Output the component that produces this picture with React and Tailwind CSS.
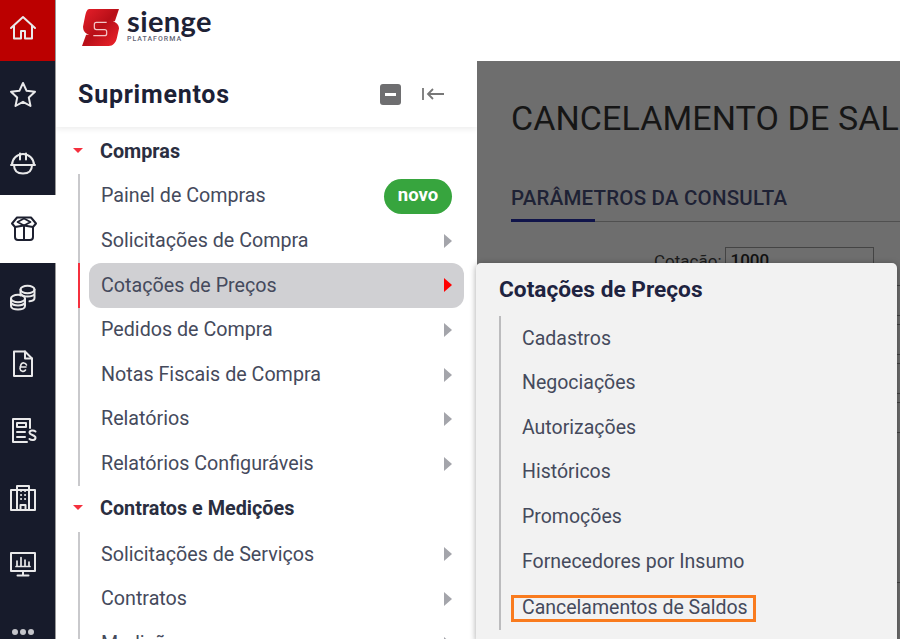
import React from "react";

const F = { fontFamily: "Roboto, 'Liberation Sans', sans-serif" };

function Ic({ children, active }) {
  return (
    <svg width="30" height="30" viewBox="0 0 30 30" fill="none" stroke={active ? "#1d2030" : "#e9e9ea"} strokeWidth="2" strokeLinejoin="round" strokeLinecap="round">
      {children}
    </svg>
  );
}

function Rail({ h, bg = "", children, cls = "" }) {
  return <div className={`flex items-center justify-center pr-[10px] ${bg} ${cls}`} style={{ height: h }}>{children}</div>;
}

function Item({ label, active, badge, arrow = true }) {
  return (
    <div className="relative flex items-center justify-between h-[44.6px]">
      {active && <div className="absolute left-[22px] top-0 w-[2px] h-[45px] bg-[#f5303e]" />}
      <div className={`ml-[33px] w-[375px] h-[45px] rounded-[12px] flex items-center pl-[12px] pr-[12px] justify-between ${active ? "bg-[#d0d0d3]" : ""}`}>
        <span className="text-[19.7px] leading-none text-[#454a5c]">{label}</span>
        {badge && <span className="bg-[#37a53e] text-white font-bold text-[18.5px] leading-none rounded-full w-[68px] h-[35px] flex items-center justify-center pb-[2px]">novo</span>}
        {arrow && !badge && <span className={`w-0 h-0 border-y-[7px] border-y-transparent border-l-[8px] ${active ? "border-l-[#f00]" : "border-l-[#a4a5ab]"}`} />}
      </div>
    </div>
  );
}

function Section({ label, h }) {
  return (
    <div className="relative flex items-center pl-[44px]" style={{ height: h }}>
      <span className="absolute left-[17px] top-[19px] w-0 h-0 border-x-[5px] border-x-transparent border-t-[5px] border-t-[#f5303e]" />
      <span className="text-[19.8px] leading-none font-bold text-[#2a2e40]">{label}</span>
    </div>
  );
}

export default function App() {
  const sub = ["Cadastros", "Negociações", "Autorizações", "Históricos", "Promoções", "Fornecedores por Insumo"];
  const ticks = [285, 315, 324, 354, 363, 393, 402, 432, 582];
  return (
    <div style={F} className="relative w-[900px] h-[639px] overflow-hidden flex bg-white">
      <div className="w-[56px] h-[639px] shrink-0 bg-[#171b2b] flex flex-col border-r border-[#999]">
        <Rail h={61} bg="bg-[#bb0000]" cls="pb-[5px]"><Ic><path d="M3 15 15 4l12 11" /><path d="M6 13v12.500h7V18h4v7.500h7V13" /></Ic></Rail>
        <Rail h={68}><Ic><path d="m15 3 3.600 7.800 8.400 1-6.200 5.800 1.700 8.400-7.500-4.200L7.500 26l1.700-8.400L3 11.800l8.400-1z" /></Ic></Rail>
        <Rail h={66}><Ic><path d="M4 18a11 11 0 0 1 22 0" /><path d="M12 6.500v6M18 6.500v6" /><path d="M3 18h24M6 18c0 6 4 8.500 9 8.500s9-2.500 9-8.500" /></Ic></Rail>
        <Rail h={68} bg="bg-white w-[57px]"><Ic active><path d="M3 9.500 8 3.500h14l5 6-3 3.500v10c0 2-1 3-3 3H9c-2 0-3-1-3-3V13z" /><path d="M8.500 8 15 4.500 21.500 8 15 11.500z" strokeWidth="1.700" /><path d="M6 13l9-1.500L24 13M15 11.500V26" /></Ic></Rail>
        <Rail h={68}><Ic><ellipse cx="19.500" cy="7.500" rx="7" ry="3.700" /><path d="M12.500 7.500v6M26.500 7.500v8.500c0 1.500-2 3-5 3.300M13 12c1 1.500 3.500 2.500 6.500 2.500s6-1 7-2.500" /><ellipse cx="10" cy="16.500" rx="7" ry="3.700" /><path d="M3 16.500v7.500c0 2 3 3.500 7 3.500s7-1.500 7-3.500v-7.500M3 20.500c1 2 3.500 3 7 3s6-1 7-3" /></Ic></Rail>
        <Rail h={66}><Ic><path d="M6 2.500h11l7 7V27H6z" /><path d="M17 2.500v7h7" /><path d="M18.500 16a3 3 0 0 0-5.500-.5l-1 4a3 3 0 0 0 5.500 1.500M12 18h6" strokeWidth="1.600" /></Ic></Rail>
        <Rail h={67}><Ic><path d="M5 3h17v9M5 3v23h14" /><path d="M9 7h9v4H9zM9 16h8M9 21h8" /><path d="M27.500 15.500c-2-1.800-6-1.200-6 1.200s6 2.300 6 5-4 3-6 1.300" strokeWidth="2" /></Ic></Rail>
        <Rail h={68}><Ic><path d="M9 7V3h12v4" /><path d="M3 7h24v20H3zM9 7v20M21 7v20M12.500 27v-5h5v5" /><path d="M13 8h.1M17 8h.1M13 12h.1M17 12h.1M13 16h.1M17 16h.1" /></Ic></Rail>
        <Rail h={64}><Ic><path d="M3 4h24v18H3z" /><path d="M15 22v4M9.500 26.500h11" /><path d="M8 17.500h14M9 17V12M13 17V8.500M17 17v-6M21 17v-4" strokeWidth="1.700" /></Ic></Rail>
        <div className="flex justify-center gap-[2px] pt-[33px] pr-[10px]">
          <span className="w-[6px] h-[6px] rounded-full bg-[#c4c5ca]" />
          <span className="w-[6px] h-[6px] rounded-full bg-[#c4c5ca]" />
          <span className="w-[6px] h-[6px] rounded-full bg-[#c4c5ca]" />
        </div>
      </div>

      <div className="flex-1 relative">
        <div className="h-[61px] bg-white flex items-start pl-[26px] pt-[9px] gap-[8px]">
          <svg width="37" height="37" viewBox="0 0 36 36">
            <defs>
              <linearGradient id="lg" x1="0" y1="0" x2="1" y2="1">
                <stop offset="0" stopColor="#e8202a" />
                <stop offset="0.5" stopColor="#b80f18" />
                <stop offset="1" stopColor="#f0242c" />
              </linearGradient>
            </defs>
            <path d="M7 0H36L32 12H30C33 13 36 15 36 19L34 28C33 33 30 36 26 36H0L4 25H7C3 24 1 21 1 17L3 7C4 3 5 0 7 0Z" fill="url(#lg)" />
            <path d="M24 13H14a2 2 0 0 0-2 2v3a2 2 0 0 0 2 2h8a2 2 0 0 1 2 2v2a2 2 0 0 1-2 2H11" fill="none" stroke="#f3c6c8" strokeWidth="1.200" />
          </svg>
          <div className="flex flex-col -mt-[1px]">
            <span className="text-[29px] leading-[26px] font-bold text-[#1e2235] tracking-[0.4px]" style={{ fontFamily: "Lato, sans-serif" }}>sienge</span>
            <span className="text-[7px] leading-[8px] mt-[1px] font-medium text-[#5f6474] tracking-[1px]">PLATAFORMA</span>
          </div>
        </div>

        <div className="flex h-[578px]">
          <div className="w-[421px] h-[578px] bg-white shrink-0 overflow-hidden relative">
            <div className="h-[66px] flex items-center pl-[22px] pr-[32px] shadow-[0_2px_6px_rgba(0,0,0,0.08)] relative">
              <span className="text-[25px] font-bold text-[#1c2136] leading-none tracking-[0.75px]">Suprimentos</span>
              <div className="ml-auto flex items-center gap-[20px]">
                <span className="w-[21px] h-[21px] rounded-[3px] bg-[#6e6e70] flex items-center justify-center"><span className="w-[11px] h-[3px] bg-white" /></span>
                <svg width="24" height="16" viewBox="0 0 24 16" fill="none" stroke="#777" strokeWidth="1.800"><path d="M2 2v12M23 8H7M12 3 7 8l5 5" /></svg>
              </div>
            </div>
            <div className="pt-[2px] relative">
              <Section label="Compras" h={45} />
              <div className="relative">
                <div className="absolute left-[22px] top-0 bottom-0 w-[2px] bg-[#c9c9cc]" />
                <Item label="Painel de Compras" badge />
                <Item label="Solicitações de Compra" />
                <Item label="Cotações de Preços" active />
                <Item label="Pedidos de Compra" />
                <Item label="Notas Fiscais de Compra" />
                <Item label="Relatórios" />
                <Item label="Relatórios Configuráveis" />
              </div>
              <Section label="Contratos e Medições" h={46} />
              <div className="relative">
                <div className="absolute left-[22px] top-0 bottom-0 w-[2px] bg-[#c9c9cc]" />
                <Item label="Solicitações de Serviços" />
                <Item label="Contratos" />
                <Item label="Medições" />
              </div>
            </div>
          </div>

          <div className="flex-1 bg-[#6e6e6e] pl-[34px] pt-[37px] overflow-hidden whitespace-nowrap">
            <div className="text-[34px] leading-[40px] text-[#161616] tracking-[0.1px]">CANCELAMENTO DE SALDOS</div>
            <div className="mt-[48px] text-[20.5px] leading-[24px] font-medium text-[#1e2235] tracking-[0.2px]">PARÂMETROS DA CONSULTA</div>
            <div className="relative mt-[9px] h-[3px] border-b-[1px] border-[#505050]">
              <div className="w-[84px] h-[3px] bg-[#10144a]" />
            </div>
            <div className="flex items-start mt-[25px] pl-[143px] gap-[3px]">
              <span className="text-[17px] text-[#1c1c1c] leading-[20px] pt-[4px]">Cotação:</span>
              <span className="w-[149px] h-[30px] border border-[#444] bg-[#6e6e6e] text-[#111] text-[17px] font-medium pl-[5px] leading-[24px]">1000</span>
            </div>
          </div>
        </div>

        {ticks.map((y) => (
          <div key={y} className="absolute left-[840px] w-[4px] h-[1px] bg-[#444]" style={{ top: y }} />
        ))}

        <div className="absolute left-[420px] top-[263px] w-[420.5px] h-[380px] bg-[#f2f2f2] rounded-[5px] shadow-[0_1px_6px_rgba(0,0,0,0.35)] pl-[23px]">
          <div className="pt-[14px] text-[22.7px] leading-[26px] font-bold text-[#1e2340]">Cotações de Preços</div>
          <div className="relative mt-[13px] pl-[21px] border-l-2 border-[#bcbcbe] h-[314px] flex flex-col">
            {sub.map((s) => (
              <div key={s} className="h-[44.6px] shrink-0 flex items-center text-[19.5px] leading-none text-[#454a5c]">{s}</div>
            ))}
            <div className="self-start -ml-[11px] pl-[8px] h-[27px] w-[245px] flex items-center text-[19.5px] leading-none whitespace-nowrap text-[#454a5c] border-[3px] border-[#f97b1e] mt-[11px]">Cancelamentos de Saldos</div>
          </div>
        </div>
      </div>
    </div>
  );
}
